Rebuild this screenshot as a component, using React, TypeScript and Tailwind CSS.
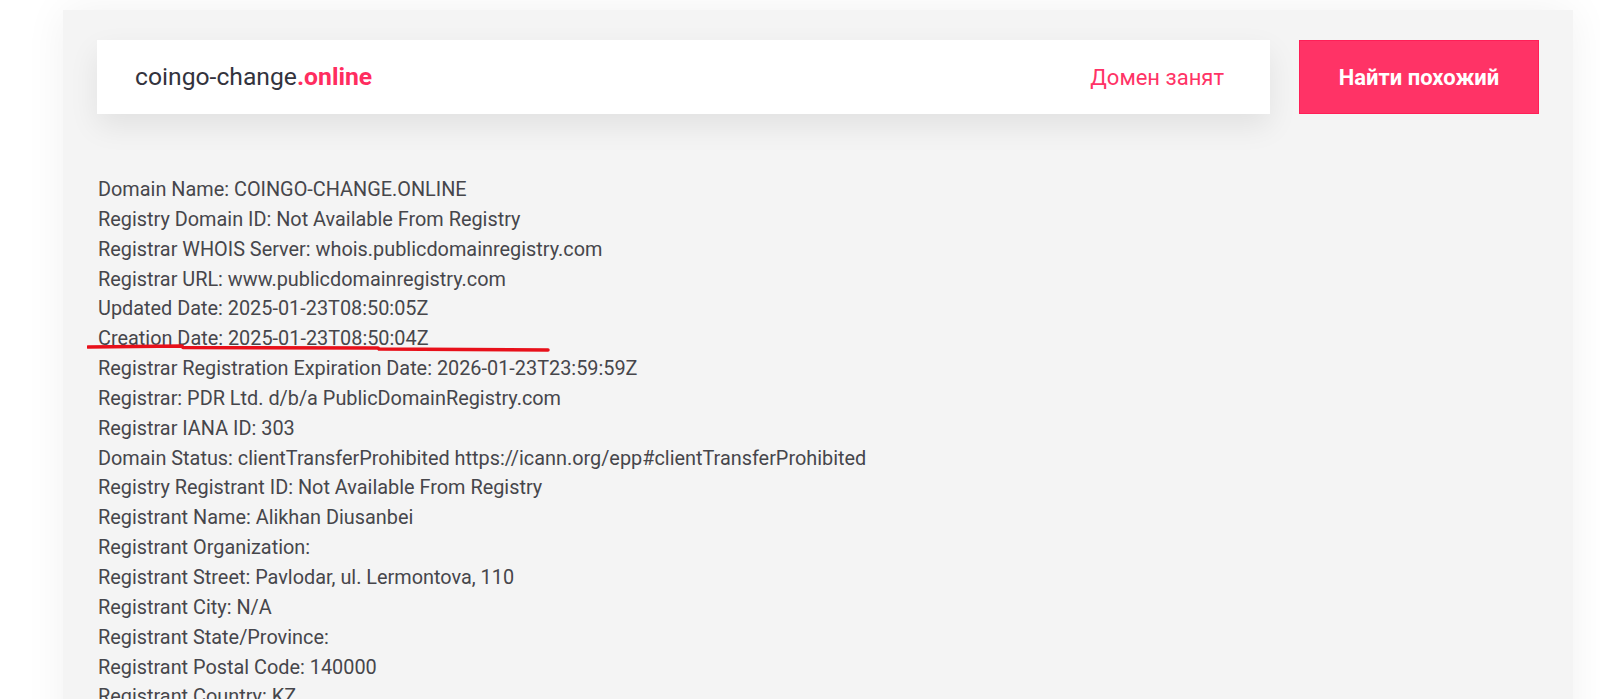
import React from 'react'

const whois = [
  'Domain Name: COINGO-CHANGE.ONLINE',
  'Registry Domain ID: Not Available From Registry',
  'Registrar WHOIS Server: whois.publicdomainregistry.com',
  'Registrar URL: www.publicdomainregistry.com',
  'Updated Date: 2025-01-23T08:50:05Z',
  'Creation Date: 2025-01-23T08:50:04Z',
  'Registrar Registration Expiration Date: 2026-01-23T23:59:59Z',
  'Registrar: PDR Ltd. d/b/a PublicDomainRegistry.com',
  'Registrar IANA ID: 303',
  'Domain Status: clientTransferProhibited https://icann.org/epp#clientTransferProhibited',
  'Registry Registrant ID: Not Available From Registry',
  'Registrant Name: Alikhan Diusanbei',
  'Registrant Organization:',
  'Registrant Street: Pavlodar, ul. Lermontova, 110',
  'Registrant City: N/A',
  'Registrant State/Province:',
  'Registrant Postal Code: 140000',
  'Registrant Country: KZ',
]

const App = () => {
  return (
    <div
      className="w-full h-[699px] overflow-hidden bg-white pt-[10px]"
      style={{ fontFamily: 'Roboto, "Liberation Sans", Arial, sans-serif' }}
    >
      <div className="ml-[63px] w-[1510px] h-[760px] bg-[#f4f4f4] px-[34px] pt-[30px] shadow-[0_0_40px_rgba(0,0,0,0.06)]">
        <div className="flex gap-[29px] h-[74px]">
          <div className="flex-1 flex items-center justify-between bg-white pl-[38px] pr-[46px] shadow-[0_12px_30px_rgba(0,0,0,0.08)]">
            <span className="text-[24.7px] text-[#33333d]">
              coingo-change<span className="text-[#ff2d5f] font-bold">.online</span>
            </span>
            <span className="text-[22px] text-[#ff3366]">Домен занят</span>
          </div>
          <button className="w-[240px] bg-[#ff3366] border border-[#ff1f57] text-white text-[22px] font-bold">
            Найти похожий
          </button>
        </div>

        <div className="relative mt-[61px] pl-px text-[19.88px] leading-[29.85px] text-[#46464b]">
          {whois.map((line) => (
            <p key={line}>{line}</p>
          ))}
          <svg
            className="absolute left-[-10px] top-[166px]"
            width="470"
            height="12"
            viewBox="0 0 470 12"
            fill="none"
          >
            <path
              d="M1 6 L95 5 L96 6.5 L291 7 L292 8 L461 9"
              stroke="#e8101a"
              strokeWidth="3.5"
              strokeLinecap="round"
              strokeLinejoin="round"
            />
          </svg>
        </div>
      </div>
    </div>
  )
}

export default App
